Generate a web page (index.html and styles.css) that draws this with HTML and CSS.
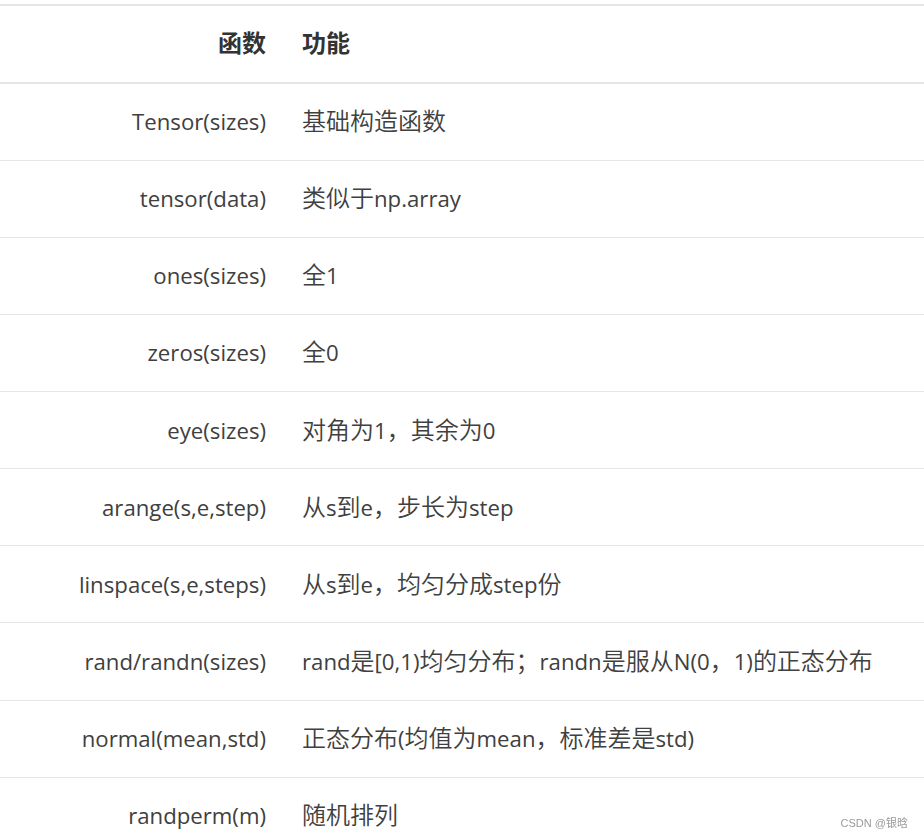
FILE: index.html
```html
<!DOCTYPE html>
<html lang="zh-CN">
<head>
  <meta charset="UTF-8" />
  <title>Tensor 创建函数</title>
  <link rel="stylesheet" href="styles.css">
</head>
<body>
  <table class="fn-table">
    <thead>
      <tr>
        <th class="fn-name"><span class="zh">函数</span></th>
        <th class="fn-desc"><span class="zh">功能</span></th>
      </tr>
    </thead>
    <tbody>
      <tr><td class="fn-name">Tensor(sizes)</td><td class="fn-desc"><span class="zh">基础构造函数</span></td></tr>
      <tr><td class="fn-name">tensor(data)</td><td class="fn-desc"><span class="zh">类似于</span>np.array</td></tr>
      <tr><td class="fn-name">ones(sizes)</td><td class="fn-desc"><span class="zh">全</span>1</td></tr>
      <tr><td class="fn-name">zeros(sizes)</td><td class="fn-desc"><span class="zh">全</span>0</td></tr>
      <tr><td class="fn-name">eye(sizes)</td><td class="fn-desc"><span class="zh">对角为</span>1<span class="zh">，其余为</span>0</td></tr>
      <tr><td class="fn-name">arange(s,e,step)</td><td class="fn-desc"><span class="zh">从</span>s<span class="zh">到</span>e<span class="zh">，步长为</span>step</td></tr>
      <tr><td class="fn-name">linspace(s,e,steps)</td><td class="fn-desc"><span class="zh">从</span>s<span class="zh">到</span>e<span class="zh">，均匀分成</span>step<span class="zh">份</span></td></tr>
      <tr><td class="fn-name">rand/randn(sizes)</td><td class="fn-desc">rand<span class="zh">是</span>[0,1)<span class="zh">均匀分布；</span>randn<span class="zh">是服从</span>N(0<span class="zh">，</span>1)<span class="zh">的正态分布</span></td></tr>
      <tr><td class="fn-name">normal(mean,std)</td><td class="fn-desc"><span class="zh">正态分布</span>(<span class="zh">均值为</span>mean<span class="zh">，标准差是</span>std)</td></tr>
      <tr><td class="fn-name">randperm(m)</td><td class="fn-desc"><span class="zh">随机排列</span></td></tr>
    </tbody>
  </table>

  <div class="watermark">CSDN @银晗</div>
</body>
</html>
```

FILE: styles.css
```css
* { margin: 0; padding: 0; box-sizing: border-box; }
html, body {
  background: #fff;
  overflow: hidden;
}
body {
  font-family: 'Open Sans', 'Noto Sans CJK SC', sans-serif;
  color: #404040;
  padding-top: 4px;
}
.fn-table {
  width: 100%;
  border-collapse: collapse;
  font-size: 22.2px;
  line-height: 1.4;
}
.fn-table th,
.fn-table td {
  vertical-align: middle;
  padding: 0 18px;
  white-space: nowrap;
}
.fn-table thead tr {
  border-top: 2px solid #e4e6e9;
  border-bottom: 2px solid #e4e6e9;
}
.fn-table th {
  height: 78px;
  font-weight: bold;
  color: #333;
}
.fn-table tbody tr { border-bottom: 1px solid #e4e6e9; }
.fn-table tbody td { height: 77.15px; }
.fn-name {
  width: 284px;
  text-align: right;
}
.fn-desc { text-align: left; }
.zh {
  font-family: 'Noto Sans CJK SC', sans-serif;
  font-size: 24px;
  line-height: 1;
}
td .zh { font-weight: 350; }
.watermark {
  position: fixed;
  right: 16px;
  bottom: 8px;
  font-family: 'Liberation Sans', 'Noto Sans CJK SC', sans-serif;
  font-size: 11px;
  color: #9a9a9a;
}
```
